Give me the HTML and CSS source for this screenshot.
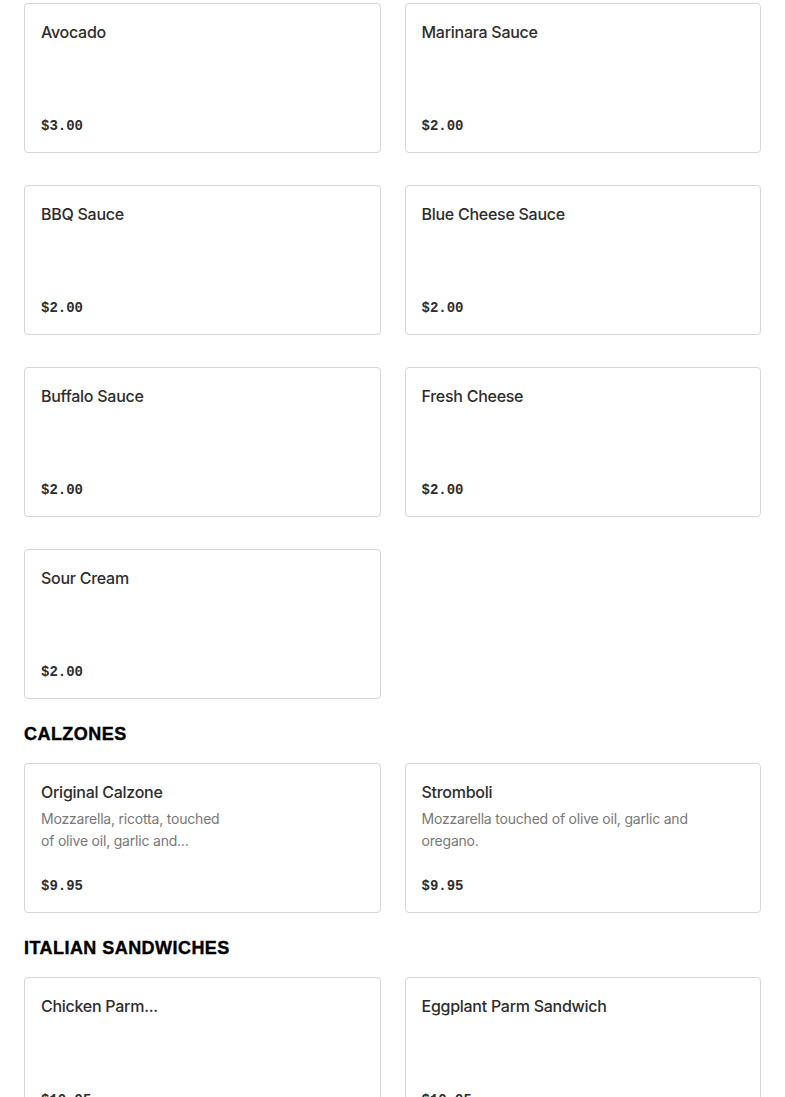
FILE: index.html
```html
<!DOCTYPE html>
<html lang="en">
<head>
<meta charset="utf-8">
<title>Menu</title>
<link rel="stylesheet" href="styles.css">
</head>
<body>
<main class="menu">
  <section class="section">
    <div class="grid">
      <div class="card"><div class="card-body"><h3 class="title">Avocado</h3></div><div class="price">$3.00</div></div>
      <div class="card"><div class="card-body"><h3 class="title">Marinara Sauce</h3></div><div class="price">$2.00</div></div>
      <div class="card"><div class="card-body"><h3 class="title">BBQ Sauce</h3></div><div class="price">$2.00</div></div>
      <div class="card"><div class="card-body"><h3 class="title">Blue Cheese Sauce</h3></div><div class="price">$2.00</div></div>
      <div class="card"><div class="card-body"><h3 class="title">Buffalo Sauce</h3></div><div class="price">$2.00</div></div>
      <div class="card"><div class="card-body"><h3 class="title">Fresh Cheese</h3></div><div class="price">$2.00</div></div>
      <div class="card"><div class="card-body"><h3 class="title">Sour Cream</h3></div><div class="price">$2.00</div></div>
    </div>
  </section>
  <section class="section">
    <h2 class="section-title">CALZONES</h2>
    <div class="grid">
      <div class="card"><div class="card-body"><h3 class="title">Original Calzone</h3><p class="desc desc-narrow">Mozzarella, ricotta, touched of olive oil, garlic and...</p></div><div class="price">$9.95</div></div>
      <div class="card"><div class="card-body"><h3 class="title">Stromboli</h3><p class="desc">Mozzarella touched of olive oil, garlic and oregano.</p></div><div class="price">$9.95</div></div>
    </div>
  </section>
  <section class="section">
    <h2 class="section-title">ITALIAN SANDWICHES</h2>
    <div class="grid">
      <div class="card"><div class="card-body"><h3 class="title">Chicken Parm...</h3></div><div class="price">$10.95</div></div>
      <div class="card"><div class="card-body"><h3 class="title">Eggplant Parm Sandwich</h3></div><div class="price">$10.95</div></div>
    </div>
  </section>
</main>
</body>
</html>
```
FILE: styles.css
```css
html, body {
  margin: 0;
  padding: 0;
  background: #ffffff;
}
body {
  font-family: "Inter", "Liberation Sans", sans-serif;
  color: #2d2d2d;
}
.menu {
  padding: 3px 24px 0;
}
.section + .section {
  margin-top: 23px;
}
.section-title {
  margin: 0 0 17px;
  font-family: "Liberation Sans", Arial, sans-serif;
  font-weight: 900;
  font-size: 18px;
  line-height: 24px;
  color: #000000;
  letter-spacing: 0.45px;
  -webkit-text-stroke: 0.4px #000000;
}
.grid {
  display: grid;
  grid-template-columns: 1fr 1fr;
  column-gap: 24px;
  row-gap: 32px;
}
.card {
  box-sizing: border-box;
  min-height: 150px;
  border: 1px solid #d6d6d6;
  border-radius: 4px;
  padding: 16px;
  display: flex;
  flex-direction: column;
  justify-content: space-between;
}
.title {
  margin: 0;
  font-size: 16px;
  line-height: 24px;
  font-weight: 500;
  letter-spacing: -0.27px;
  color: #2d2d2d;
}
.desc {
  margin: 4px 0 0;
  font-size: 14px;
  line-height: 22px;
  letter-spacing: -0.2px;
  color: #787878;
}
.desc-narrow {
  max-width: 185px;
}
.price {
  margin-top: 22px;
  padding-top: 2px;
  font-family: "Liberation Mono", "DejaVu Sans Mono", monospace;
  font-size: 14px;
  line-height: 20px;
  font-weight: 700;
  color: #2d2d2d;
}
```
